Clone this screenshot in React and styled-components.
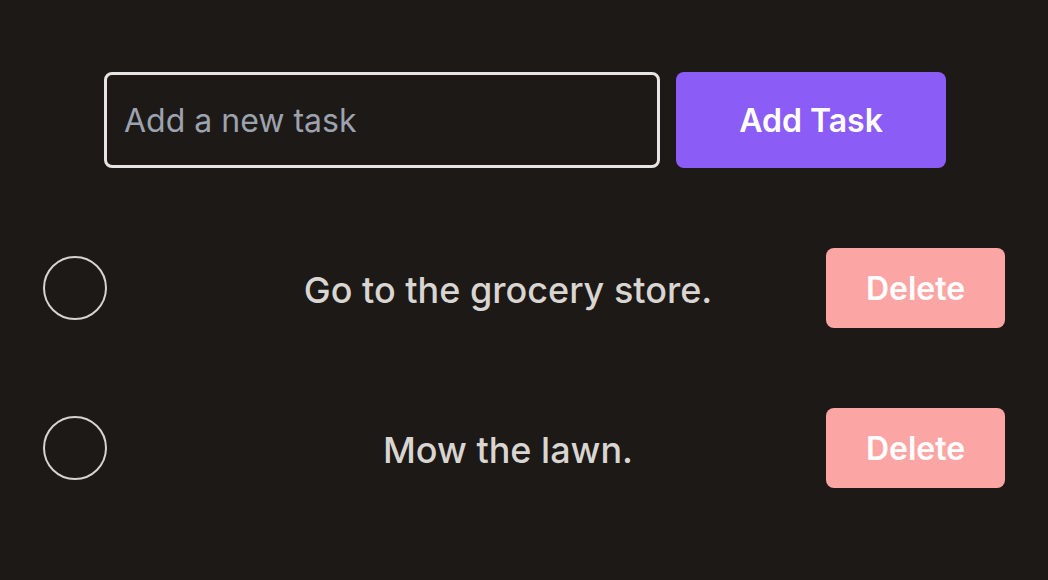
import React, { useState } from "react";
import styled, { createGlobalStyle } from "styled-components";

const GlobalStyle = createGlobalStyle`
  html, body {
    margin: 0;
    padding: 0;
    background: #1c1917;
  }
  body {
    font-family: Inter, "Noto Sans", sans-serif;
  }
`;

const Page = styled.div`
  min-height: 100vh;
  background: #1c1917;
  display: flex;
  flex-direction: column;
  padding: 72px 43px 0;
  box-sizing: border-box;
  gap: 80px;
`;

const Form = styled.form`
  display: flex;
  justify-content: center;
  gap: 16px;
  margin-left: 2px;
`;

const Input = styled.input`
  width: 556px;
  height: 96px;
  box-sizing: border-box;
  background: transparent;
  border: 3px solid #e7e5e4;
  border-radius: 8px;
  padding: 0 17px;
  font-family: Inter, sans-serif;
  font-size: 32px;
  color: #e7e5e4;
  outline: none;
  &::placeholder {
    color: #9ca3af;
  }
`;

const AddButton = styled.button`
  width: 270px;
  height: 96px;
  border: none;
  border-radius: 8px;
  background: #8b5cf6;
  color: #ffffff;
  font-family: Inter, sans-serif;
  font-size: 32px;
  font-weight: 600;
  cursor: pointer;
`;

const List = styled.ul`
  list-style: none;
  margin: 0;
  padding: 0;
  display: flex;
  flex-direction: column;
  gap: 80px;
`;

const Row = styled.li`
  display: flex;
  align-items: center;
  height: 80px;
`;

const CheckSlot = styled.div`
  width: 147px;
  display: flex;
  align-items: center;
`;

const Circle = styled.button`
  width: 64px;
  height: 64px;
  box-sizing: border-box;
  border-radius: 50%;
  border: 2px solid #d6d3d1;
  background: transparent;
  padding: 0;
  cursor: pointer;
`;

const Label = styled.span`
  flex: 1;
  text-align: center;
  color: #d9d5d1;
  font-size: 36px;
  font-weight: 500;
  padding-top: 4px;
`;

const DeleteButton = styled.button`
  width: 179px;
  height: 80px;
  border: none;
  border-radius: 8px;
  background: #fca5a5;
  color: #ffffff;
  font-family: Inter, sans-serif;
  font-size: 32px;
  font-weight: 600;
  cursor: pointer;
`;

export default function App() {
  const [tasks] = useState(["Go to the grocery store.", "Mow the lawn."]);
  return (
    <>
      <GlobalStyle />
      <Page>
        <Form onSubmit={(e) => e.preventDefault()}>
          <Input placeholder="Add a new task" />
          <AddButton type="submit">Add Task</AddButton>
        </Form>
        <List>
          {tasks.map((t) => (
            <Row key={t}>
              <CheckSlot>
                <Circle aria-label="complete" />
              </CheckSlot>
              <Label>{t}</Label>
              <DeleteButton>Delete</DeleteButton>
            </Row>
          ))}
        </List>
      </Page>
    </>
  );
}
